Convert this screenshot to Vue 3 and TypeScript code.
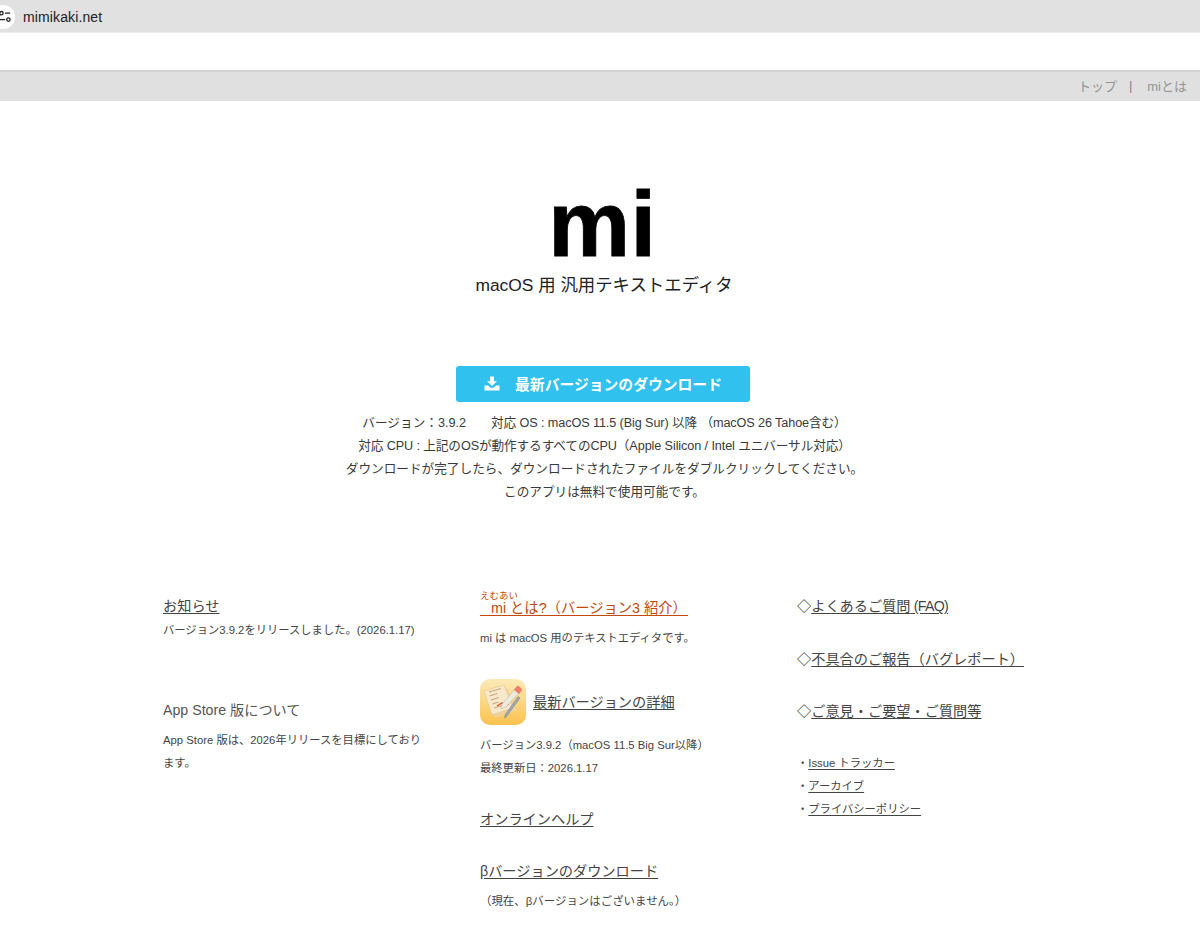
<script setup lang="ts">
const infoLines: string[] = [
  'ダウンロードが完了したら、ダウンロードされたファイルをダブルクリックしてください。',
  'このアプリは無料で使用可能です。',
]
const mainLinks: string[] = ['不具合のご報告（バグレポート）', 'ご意見・ご要望・ご質問等']
const subLinks: string[] = ['Issue トラッカー', 'アーカイブ', 'プライバシーポリシー']
</script>

<template>
  <div class="page">
    <div class="addressbar">
      <svg class="site-icon" width="24" height="24" viewBox="0 0 24 24" fill="none">
        <circle cx="12" cy="12" r="12" fill="#fff" />
        <g stroke="#222" stroke-width="1.3">
          <circle cx="10.4" cy="8.2" r="1.7" />
          <path d="M14 8.200h5.200M8.800 14.600h5.400" />
          <circle cx="17.400" cy="14.600" r="1.700" />
        </g>
      </svg>
      <span class="domain">mimikaki.net</span>
    </div>
    <div class="blank"></div>
    <nav class="topnav">
      <a>トップ</a>
      <span class="sep">|</span>
      <a>miとは</a>
    </nav>

    <header class="hero">
      <h1>mi</h1>
      <p class="tagline">macOS 用 汎用テキストエディタ</p>
    </header>

    <section class="download">
      <button class="dl-button" type="button">
        <svg class="dl-icon" width="16" height="15" viewBox="0 0 16 15" fill="#fff">
          <path d="M6 0.500h4v4.700h3l-5 4.800-5-4.800h3z" />
          <path d="M0.500 9.500h3.600l2.400 2.200h3l2.400-2.200h3.600v5h-15z" />
        </svg>
        <span>最新バージョンのダウンロード</span>
      </button>
      <div class="info">
        <p><span class="version">バージョン：3.9.2</span><span class="tight">対応 OS : macOS 11.5 (Big Sur) 以降 （macOS 26 Tahoe含む）</span></p>
        <p class="tight">対応 CPU : 上記のOSが動作するすべてのCPU（Apple Silicon / Intel ユニバーサル対応）</p>
        <p v-for="line in infoLines" :key="line">{{ line }}</p>
      </div>
    </section>

    <section class="columns">
      <div class="col">
        <h2><a>お知らせ</a></h2>
        <p class="small release">バージョン3.9.2をリリースしました。(2026.1.17)</p>
        <h2 class="plain-title">App Store 版について</h2>
        <p class="small store">App Store 版は、2026年リリースを目標にしております。</p>
      </div>

      <div class="col">
        <h2 class="orange-title">
          <span class="ruby-label">えむあい</span>
          <span class="orange-text">mi とは?（バージョン3 紹介）</span>
        </h2>
        <p class="small intro">mi は macOS 用のテキストエディタです。</p>

        <div class="latest">
          <svg class="app-icon" width="46" height="46" viewBox="0 0 46 46">
            <defs>
              <linearGradient id="appbg" x1="0" y1="0" x2="0" y2="1">
                <stop offset="0" stop-color="#fdeab8" />
                <stop offset="1" stop-color="#fbc24e" />
              </linearGradient>
            </defs>
            <rect width="46" height="46" rx="10" fill="url(#appbg)" />
            <path d="M7 15 27 9l10 22-22 8z" fill="#f0d29a" />
            <path d="M4 12 24 6l9 23-21 7z" fill="#f8e9cc" stroke="#dcbd86" stroke-width=".5" />
            <path d="M9 13l12-3.500M9.500 17l8-2.500M11 21l8-2.500M12.500 25l6-2M14 29l10-3" stroke="#c8a67a" stroke-width="1.100" />
            <path d="M17 27l5-3 2 3 5-2" fill="none" stroke="#d9552c" stroke-width="1.400" />
            <path d="M22 25 35 10l4.500 3.500L26 28l-5 2z" fill="#ece9dd" stroke="#b7ad98" stroke-width=".5" />
            <path d="M34 11l2.500-3.500a2 2 0 0 1 3 .2l2 1.800a2 2 0 0 1 0 2.500L39 15z" fill="#ee7f66" />
            <path d="M40 19 27 37l-2.500 2 .7-3.500L38 17.500z" fill="#9fa8ac" stroke="#77828a" stroke-width=".5" />
          </svg>
          <h2><a>最新バージョンの詳細</a></h2>
        </div>
        <p class="small version-line">バージョン3.9.2（macOS 11.5 Big Sur以降）</p>
        <p class="small">最終更新日：2026.1.17</p>

        <h2 class="help"><a>オンラインヘルプ</a></h2>
        <h2 class="beta"><a>βバージョンのダウンロード</a></h2>
        <p class="small beta-note">（現在、βバージョンはございません。）</p>
      </div>

      <div class="col">
        <h2 class="diamond-title"><span class="diamond">◇</span><a>よくあるご質問<span class="faq"> (FAQ)</span></a></h2>
        <h2 v-for="link in mainLinks" :key="link" class="diamond-title"><span class="diamond">◇</span><a>{{ link }}</a></h2>
        <ul class="sublinks">
          <li v-for="link in subLinks" :key="link">・<a>{{ link }}</a></li>
        </ul>
      </div>
    </section>
  </div>
</template>

<style>
html, body { margin: 0; background: #fff; }
</style>

<style scoped>
.page {
  width: 1200px;
  height: 945px;
  overflow: hidden;
  font-family: "Liberation Sans", "Noto Sans CJK JP", sans-serif;
  color: #333;
  background: #fff;
}
.addressbar {
  height: 33px;
  background: #e1e1e1;
  display: flex;
  align-items: center;
  border-bottom: 1px solid #ebebeb;
  box-sizing: border-box;
}
.site-icon {
  flex: none;
  margin-left: -9px;
  margin-top: 1px;
}
.domain {
  margin: 1px 0 0 8px;
  font-size: 14px;
  letter-spacing: 0.12px;
  color: #222;
}
.blank {
  height: 37px;
  background: #fff;
}
.topnav {
  height: 31px;
  box-sizing: border-box;
  background: #e0e0e0;
  border-top: 2px solid #d3d3d3;
  display: flex;
  justify-content: flex-end;
  align-items: center;
  padding: 0 13px 2px 0;
  font-size: 13px;
  color: #949494;
}
.sep { margin: 0 15px 0 12px; color: #808080; }
.hero {
  text-align: center;
  margin-top: 75px;
  padding-left: 5px;
}
.hero h1 {
  margin: 0;
  font-size: 92px;
  line-height: 96px;
  font-weight: 700;
  color: #000;
  letter-spacing: 0.5px;
  -webkit-text-stroke: 0.8px #000;
}
.tagline {
  margin: 0 0 0 3px;
  font-size: 17.4px;
  line-height: 26px;
  color: #222;
}
.download {
  display: flex;
  flex-direction: column;
  align-items: center;
  margin-top: 68px;
  padding-left: 9px;
}
.dl-button {
  width: 294px;
  height: 36px;
  margin-left: -3px;
  border: 0;
  border-radius: 3px;
  background: #30c1ef;
  color: #fff;
  font: inherit;
  font-size: 14.8px;
  font-weight: 700;
  display: flex;
  align-items: center;
  justify-content: center;
  gap: 15px;
  padding: 0 0 2px;
}
.info {
  margin-top: 10px;
  text-align: center;
  font-size: 12.65px;
  line-height: 23px;
  color: #3a3a3a;
}
.info p { margin: 0; }
.version { margin-right: 25px; }
.tight { letter-spacing: -0.1px; }
.columns {
  display: grid;
  grid-template-columns: 261px 261px 261px;
  column-gap: 56px;
  margin: 90px 0 0 163px;
}
h2 {
  margin: 0;
  font-weight: 400;
  font-size: 14.2px;
  line-height: 24px;
  color: #444;
}
.col a {
  text-decoration: underline;
  text-underline-offset: 2px;
  color: #444;
}
.small {
  margin: 0;
  font-size: 11.3px;
  line-height: 23px;
  color: #444;
}
.release { margin-top: 1px; }
.plain-title { margin-top: 56px; color: #555; }
.store { margin-top: 6.5px; }

.orange-title {
  position: relative;
  padding-top: 7px;
  font-size: 14.3px;
  line-height: 14px;
  color: #c14a0c;
}
.ruby-label {
  position: absolute;
  left: 0;
  top: -3px;
  font-size: 9.5px;
  line-height: 10px;
}
.orange-text {
  display: block;
  width: fit-content;
  padding: 0 1px 0 11px;
  border-bottom: 1px solid #c14a0c;
}
.intro { margin-top: 10.5px; }
.latest {
  display: flex;
  align-items: center;
  gap: 7px;
  margin-top: 29.5px;
}
.app-icon { flex: none; }
.version-line { margin-top: 8.5px; }
.help { margin-top: 27.5px; }
.beta { margin-top: 28px; }
.beta-note { margin-top: 7px; font-size: 11.45px; }

.diamond-title { margin-bottom: 28.5px; }
.diamond { color: #222; }
.faq { letter-spacing: -0.7px; }
.sublinks {
  list-style: none;
  margin: 3px 0 0;
  padding: 0;
  font-size: 11.3px;
  line-height: 23px;
  color: #444;
}
</style>
